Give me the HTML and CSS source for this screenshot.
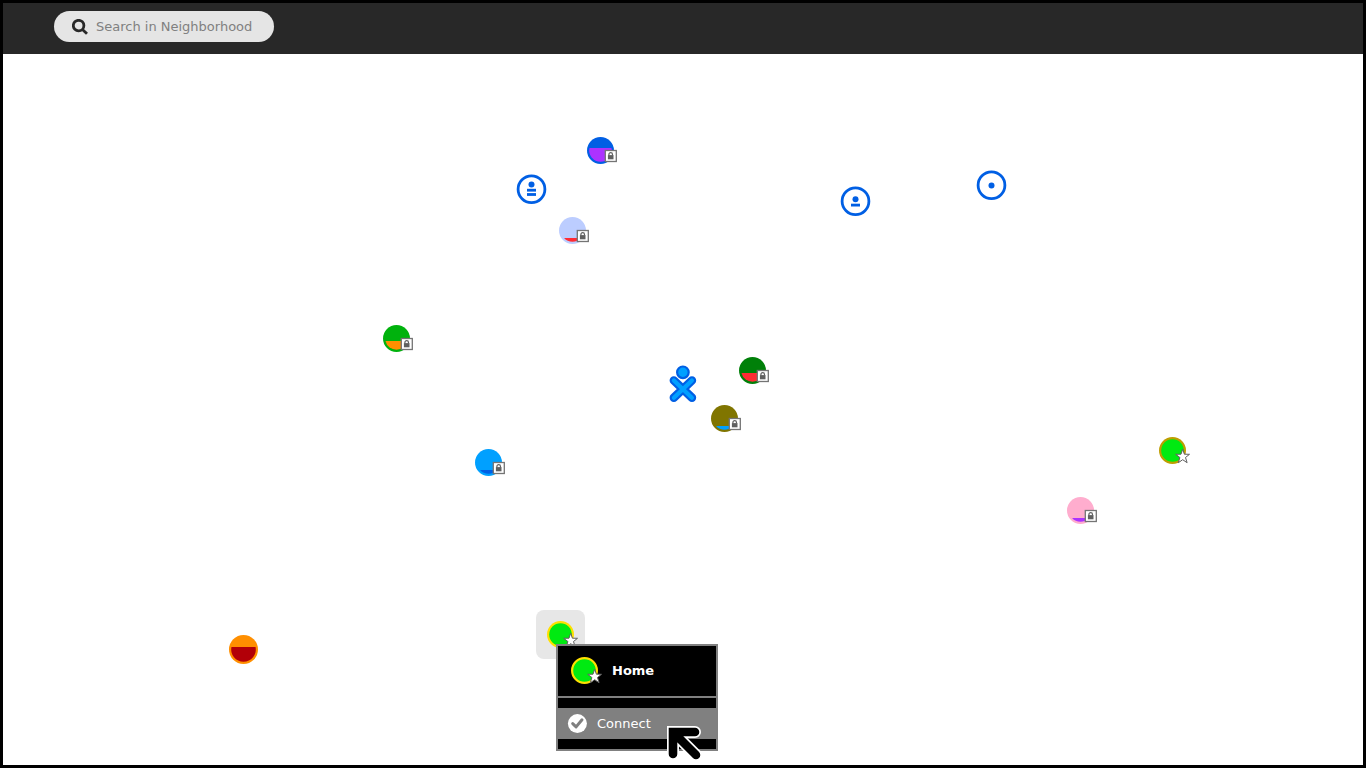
FILE: index.html
```html
<!DOCTYPE html>
<html lang="en">
<head>
<meta charset="utf-8">
<title>Neighborhood</title>
<link rel="stylesheet" href="styles.css">
<script src="nodes.js" defer></script>
</head>
<body>
<svg class="defs" aria-hidden="true">
  <defs>
    <g id="lock">
      <rect x="4.8" y="0" width="11" height="11" fill="#fff" stroke="#747474" stroke-width="1.3"/>
      <rect x="7.4" y="4.6" width="5.6" height="4.2" fill="#606060"/>
      <path d="M8.4 5V4a1.8 1.8 0 0 1 3.6 0V5" fill="none" stroke="#606060" stroke-width="1.2"/>
    </g>
    <path id="star" d="M10.2 -1.3L11.9 3.7L17 3.8L13 7L14.6 12.2L10.2 9.2L5.8 12.2L7.4 7L3.2 3.8L8.5 3.7Z" fill="#fff" stroke="#606060" stroke-width="1"/>
  </defs>
</svg>
<header class="toolbar">
  <label class="search">
    <svg class="search-icon" width="16" height="16" viewBox="0 0 16 16" aria-hidden="true"><circle cx="6.6" cy="6.6" r="5.3"/><path d="M10.4 10.4L15 14.8"/></svg>
    <input type="text" placeholder="Search in Neighborhood" aria-label="Search in Neighborhood">
  </label>
</header>
<main class="canvas" id="canvas">
  <section class="palette" aria-label="Home">
    <h2 class="palette-title">
      <svg width="40" height="40" viewBox="-20.5 -19.5 40 40" aria-hidden="true"><circle r="12.4" fill="#00ea11" stroke="#ffe000" stroke-width="2.2"/><use href="#star"/></svg>
      <span>Home</span>
    </h2>
    <div class="palette-menu">
      <button class="palette-item" type="button">
        <svg width="20" height="20" viewBox="0 0 20 20" aria-hidden="true"><circle cx="10.4" cy="9.6" r="9.5" fill="#fff"/><path d="M5.7 9.6L9.1 12.9L15 5.8" fill="none" stroke="#808080" stroke-width="3" stroke-linecap="round" stroke-linejoin="round"/></svg>
        <span>Connect</span>
      </button>
    </div>
  </section>
  <svg class="cursor" width="40" height="40" viewBox="0 0 40 40" aria-hidden="true">
    <g fill="none" stroke-linecap="round">
      <path d="M9 31V9H31M9 9L32 32" stroke="#fff" stroke-width="12"/>
      <path d="M9 31V9H31M9 9L32 32" stroke="#000" stroke-width="8.6"/>
    </g>
  </svg>
</main>
</body>
</html>
```
FILE: styles.css
```css
* {
  box-sizing: border-box;
}

body {
  margin: 0;
  min-height: 100vh;
  display: flex;
  flex-direction: column;
  border: 3px solid #000;
  background: #fff;
  font: 13px/16px "DejaVu Sans", sans-serif;
}

button,
input {
  font: inherit;
  margin: 0;
  padding: 0;
  border: 0;
  background: none;
}

svg {
  display: block;
  flex: none;
}

.defs {
  position: absolute;
  width: 0;
  height: 0;
}

.toolbar {
  padding: 8px 51px 12px;
  background: #282828;
}

.search {
  display: flex;
  align-items: center;
  gap: 8px;
  width: 220px;
  height: 31px;
  padding: 0 18px;
  border-radius: 16px;
  background: #e5e5e5;
}

.search-icon {
  fill: none;
  stroke: #282828;
  stroke-width: 2.8;
}

.search input {
  flex: 1;
  min-width: 0;
  outline: none;
  color: #282828;
}

.search input::placeholder {
  color: #808080;
  opacity: 1;
}

.canvas {
  position: relative;
  flex: 1;
}

.node {
  position: absolute;
  border-radius: 8px;
}

.node-active {
  background: #e7e7e7;
}

.palette {
  position: absolute;
  left: 553px;
  top: 590px;
  width: 162px;
  border: 2px solid #808080;
  background: #000;
  color: #fff;
}

.palette-title {
  display: flex;
  align-items: center;
  gap: 8px;
  margin: 0;
  padding: 5px 6px;
  border-bottom: 2px solid #808080;
  font-size: 13px;
  font-weight: bold;
}

.palette-menu {
  padding: 10px 0;
}

.palette-item {
  display: flex;
  align-items: center;
  gap: 10px;
  width: 100%;
  height: 31px;
  padding: 0 9px;
  background: #808080;
  color: #fff;
}

.cursor {
  position: absolute;
  left: 661px;
  top: 669px;
  pointer-events: none;
}
```
FILE: nodes.js
```js
const dot = (y) => `<circle cy="${y}" r="3" fill="#005fe4"/>`;
const bar = (y) => `<rect x="-4.5" y="${y}" width="9" height="2.8" fill="#005fe4"/>`;
const ring = '<circle cy="-0.2" r="13.4" fill="#fff" stroke="#005fe4" stroke-width="2.8"/>';

// Access point: an outer disc whose inner disc is filled up from the given level.
function network(edge, fill, level, badge, r = 13.5) {
  const inner = r - 2.2;
  const half = Math.sqrt(Math.max(0, inner * inner - level * level));
  const large = level < 0 ? 1 : 0;
  const shape = level <= -inner
    ? `<circle r="${inner}" fill="${fill}"/>`
    : `<path d="M${-half} ${level}A${inner} ${inner} 0 ${large} 0 ${half} ${level}Z" fill="${fill}"/>`;
  return `<circle r="${r}" fill="${edge}"/>${shape}${badge ? `<use href="#${badge}"/>` : ""}`;
}

const limbs = "M-8.6 -3L9.4 14.2M9.4 -3L-8.6 14.2";
const buddy = `<path d="${limbs}" stroke="#005fe4" stroke-width="8.6" stroke-linecap="round"/>
  <circle cx="0.4" cy="-11.2" r="5.8" fill="#00a0ff" stroke="#005fe4" stroke-width="2.2"/>
  <path d="${limbs}" stroke="#00a0ff" stroke-width="4.2" stroke-linecap="round"/>`;

const nodes = [
  ["Network 1", 573, 72, network("#005fe4", "#ac32ff", -2.5, "lock")],
  ["Ad-hoc network 3", 504, 111, ring + dot(-5) + bar(-0.7) + bar(3.6)],
  ["Ad-hoc network 2", 828, 123, ring + dot(-2.2) + bar(2.2)],
  ["Ad-hoc network 1", 964, 107, ring + dot(0)],
  ["Network 2", 545, 152, network("#bccdff", "#ff2b34", 7.5, "lock")],
  ["Network 3", 369, 260, network("#00b20d", "#ff8f00", 2.5, "lock")],
  ["Network 4", 725, 292, network("#008009", "#ff2b34", 2.5, "lock")],
  ["Network 5", 697, 340, network("#807500", "#00a0ff", 7.5, "lock")],
  ["Network 6", 461, 384, network("#00a0ff", "#005fe4", 7.5, "lock")],
  ["Network 7", 1053, 432, network("#ffadce", "#ac32ff", 7.5, "lock")],
  ["Network 8", 1145, 372, network("#be9e00", "#00ea11", -12, "star")],
  ["Network 9", 216, 571, network("#ff8f00", "#b20008", -2.5, "", 14.5)],
  ["Home", 533, 556, network("#ffe000", "#00ea11", -12, "star"), "node-active"],
  ["Owner", 655, 305, buddy],
];

const canvas = document.getElementById("canvas");
const list = nodes.map(([name, x, y, art, extra = ""]) =>
  `<button type="button" class="node ${extra}" aria-label="${name}" style="left:${x}px;top:${y}px">
    <svg width="49" height="49" viewBox="-24.5 -24.5 49 49" aria-hidden="true">${art}</svg>
  </button>`).join("");
canvas.insertAdjacentHTML("afterbegin", list);
```
